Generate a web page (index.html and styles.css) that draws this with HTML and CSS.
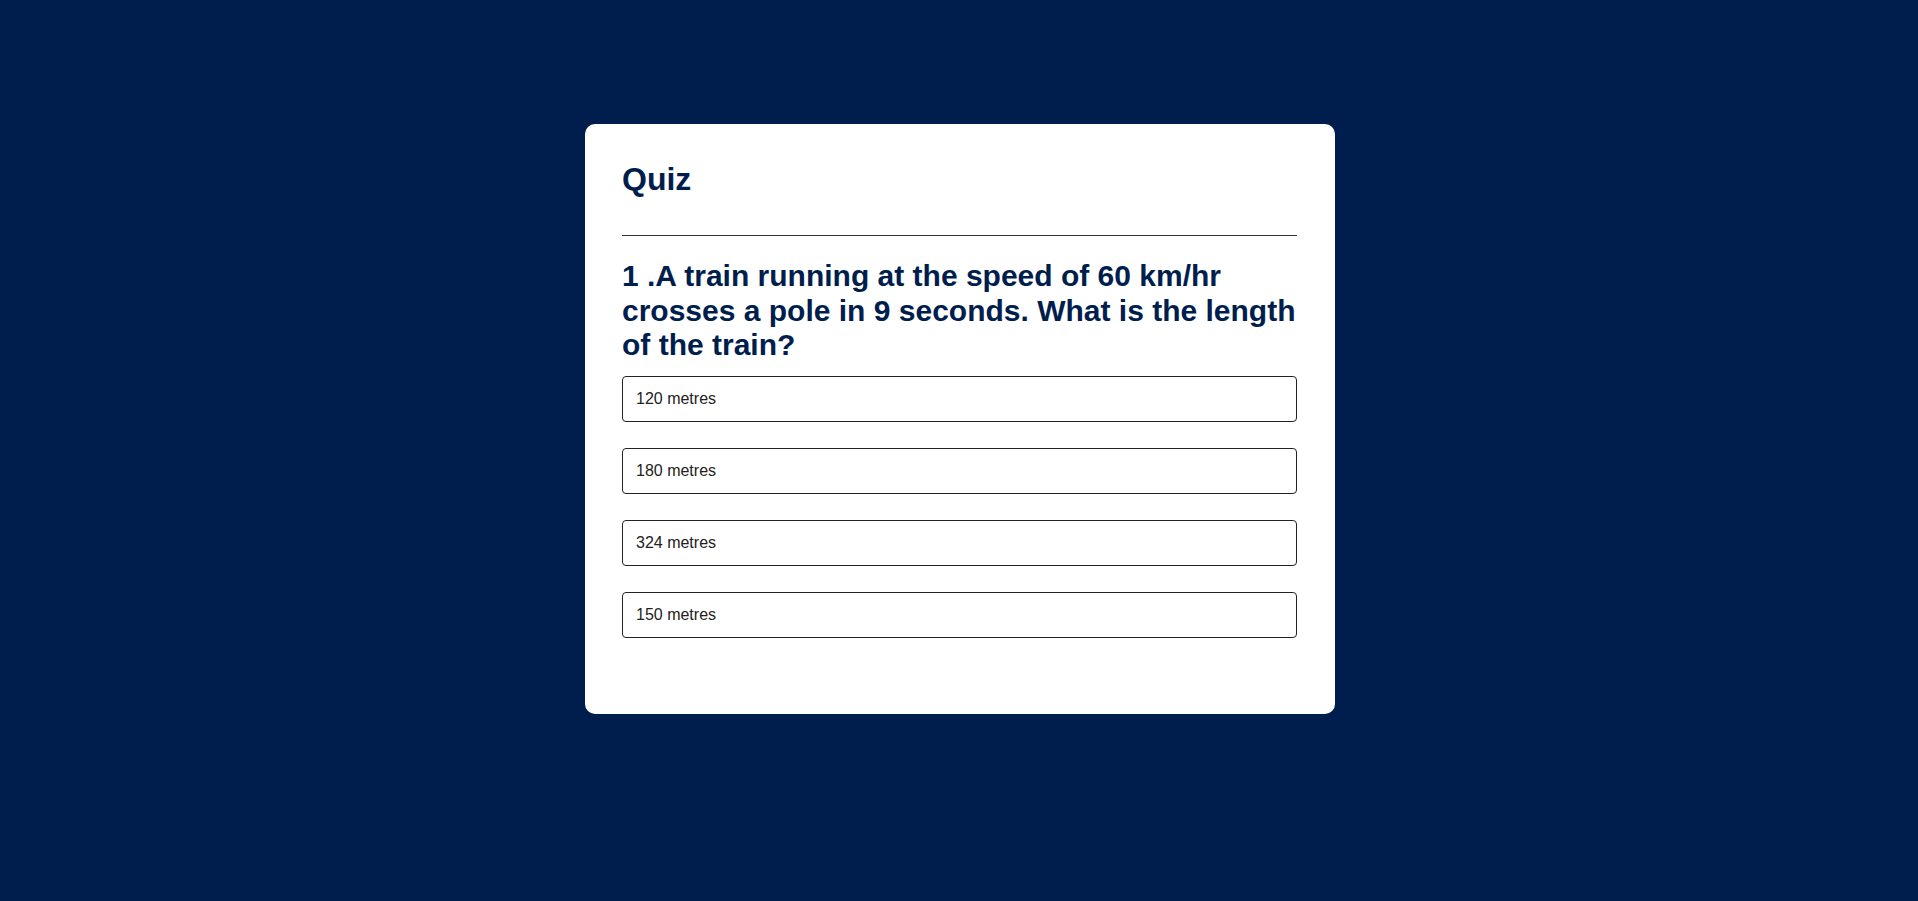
FILE: index.html
```html
<!DOCTYPE html>
<html lang="en">
<head>
<meta charset="UTF-8">
<title>Quiz</title>
<link rel="stylesheet" href="styles.css">
</head>
<body>
<div class="app">
  <h1 class="title">Quiz</h1>
  <div class="quiz">
    <h2 class="question">1 .A train running at the speed of 60 km/hr crosses a pole in 9 seconds. What is the length of the train?</h2>
    <div class="answers">
      <button class="btn">120 metres</button>
      <button class="btn">180 metres</button>
      <button class="btn">324 metres</button>
      <button class="btn">150 metres</button>
    </div>
  </div>
</div>
</body>
</html>
```

FILE: styles.css
```css
* {
  margin: 0;
  padding: 0;
  box-sizing: border-box;
}

body {
  background: #001e4d;
  font-family: "Liberation Sans", Arial, sans-serif;
  min-height: 901px;
  padding-left: 1px;
}

.app {
  background: #ffffff;
  width: 750px;
  margin: 124px auto 0;
  border-radius: 10px;
  padding: 37.5px 37.5px 76px;
}

.title {
  font-size: 32px;
  font-weight: 700;
  color: #001e4d;
  line-height: 35.5px;
  padding-bottom: 38px;
  border-bottom: 1px solid #333333;
}

.question {
  font-size: 30px;
  font-weight: 700;
  color: #001e4d;
  line-height: 34.5px;
  margin-top: 23px;
}

.answers {
  display: flex;
  flex-direction: column;
  gap: 26px;
  margin-top: 13.5px;
}

.btn {
  display: block;
  width: 100%;
  background: #ffffff;
  color: #222222;
  font-family: "Liberation Sans", Arial, sans-serif;
  font-size: 16px;
  line-height: 18px;
  font-weight: 400;
  text-align: left;
  padding: 13px 12px 13px 13px;
  border: 1px solid #222222;
  border-radius: 4px;
  cursor: pointer;
}
```
